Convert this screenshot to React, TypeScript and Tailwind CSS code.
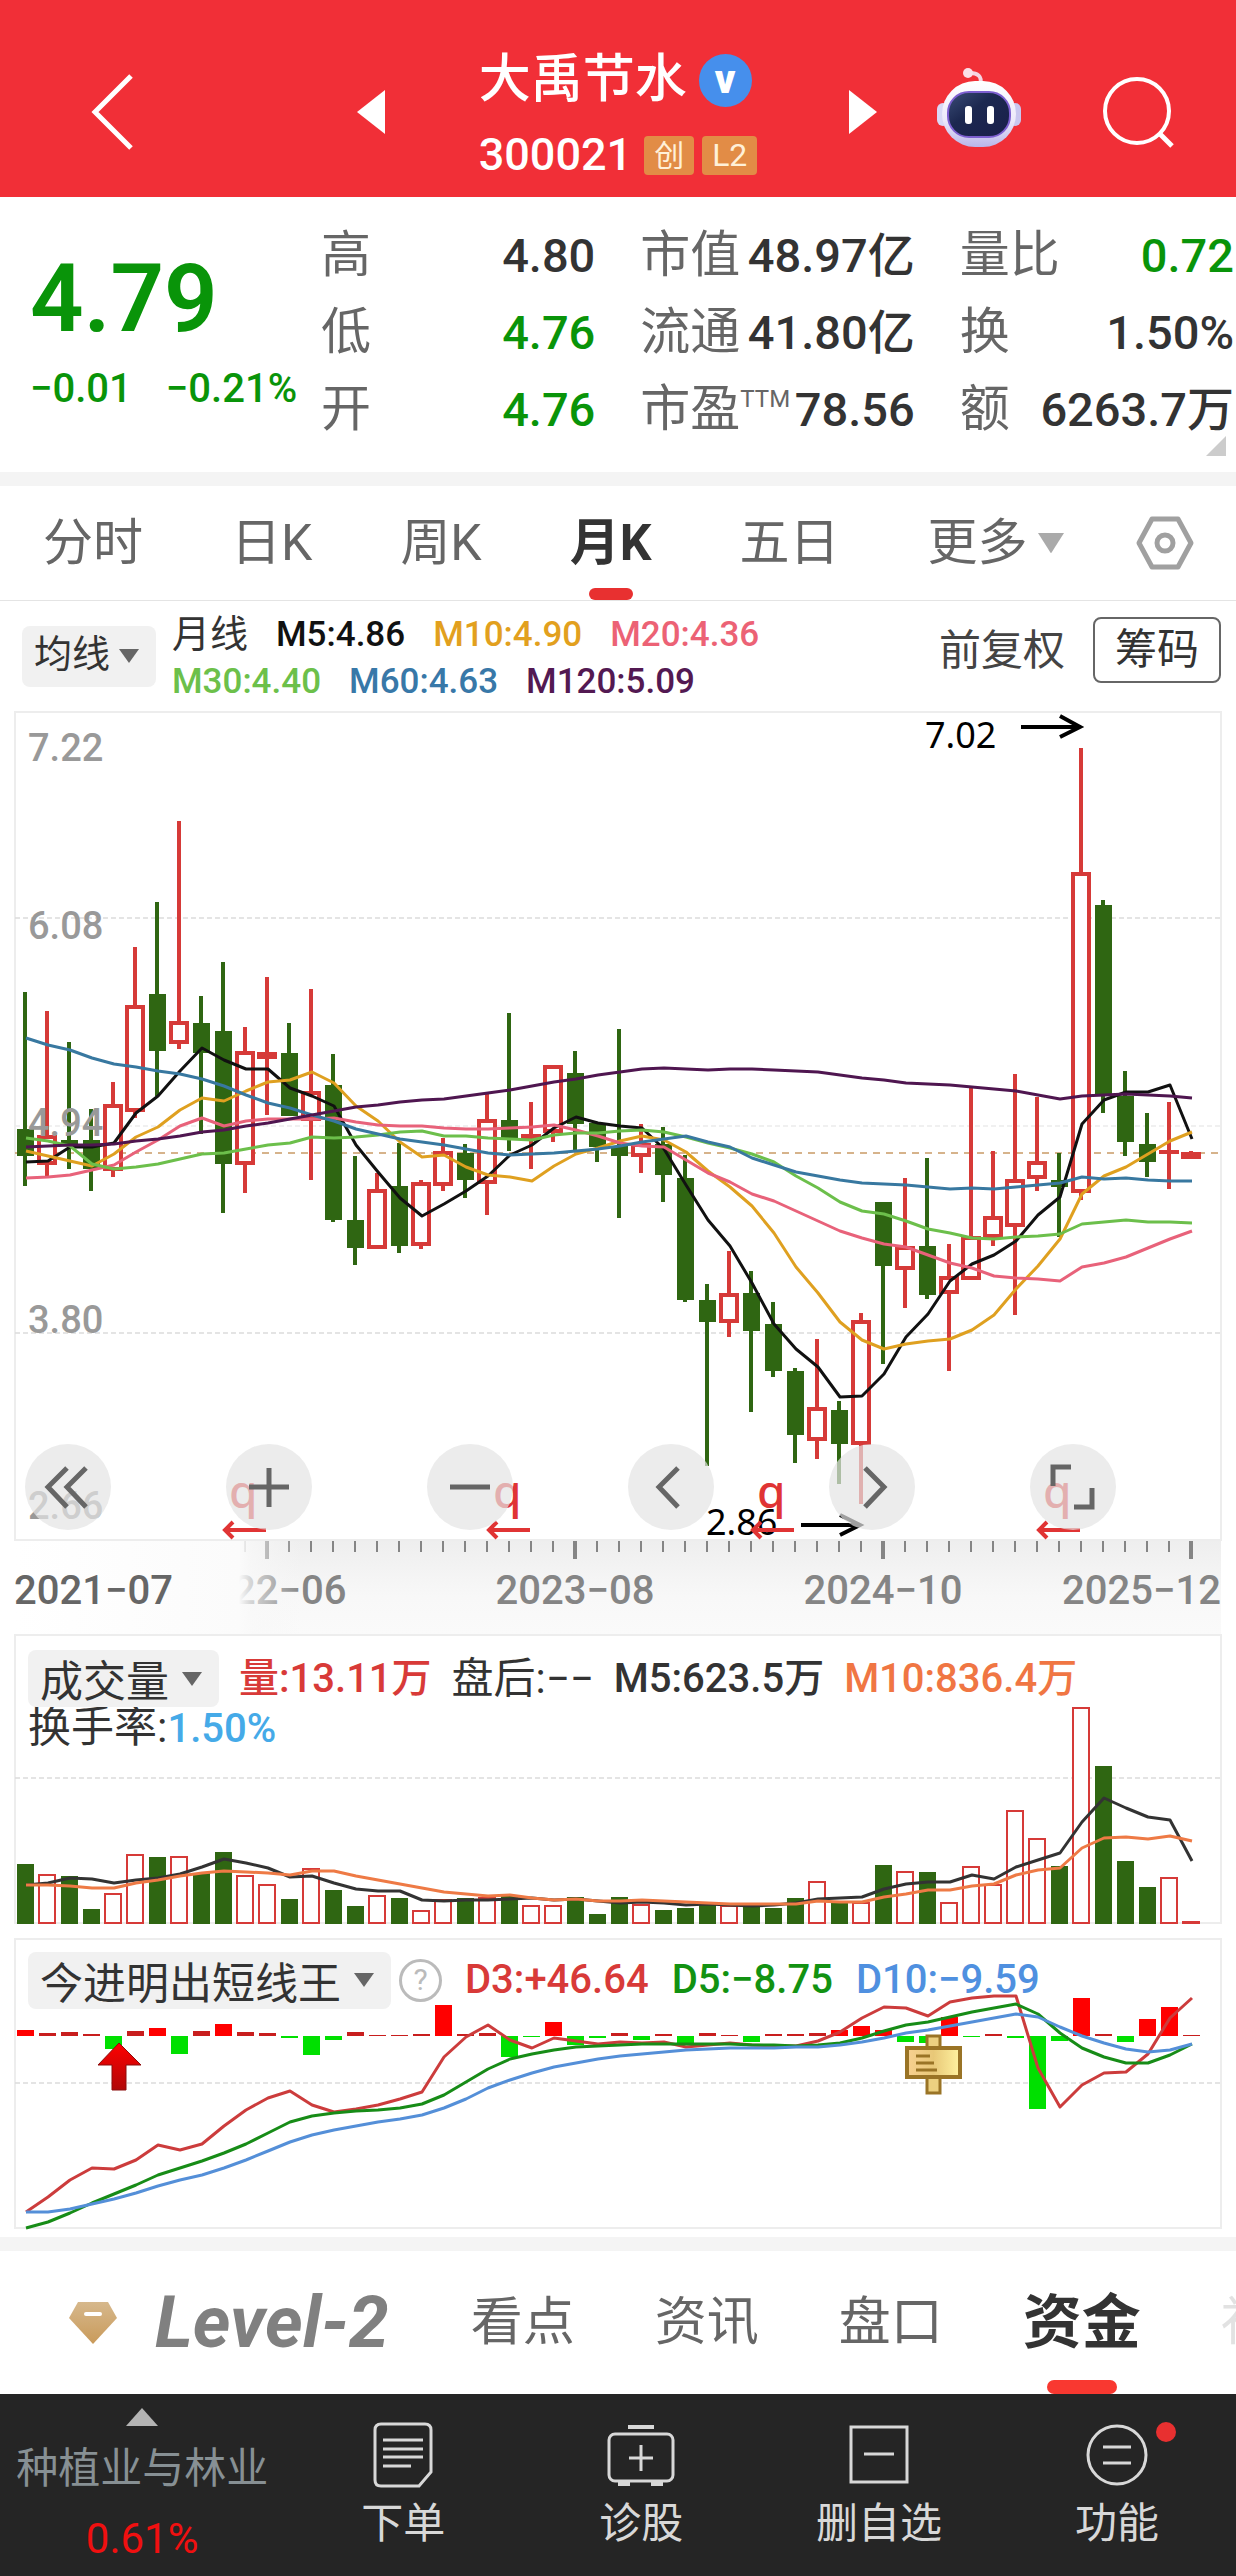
import React from "react";

type Candle = {
	up: boolean;
	high: number;
	top: number;
	bottom: number;
	low: number;
};

const STEP = 22;
const FIRST_X = 25;
const UP = "#d63a38";
const DOWN = "#2f6612";

const xAt = (index: number) => FIRST_X + index * STEP;

// up(1)/down(0), high, body top, body bottom, low
const CANDLES: Candle[] = [
	[0, 992, 1129, 1156, 1186],
	[1, 1011, 1135, 1165, 1177],
	[0, 1042, 1140, 1144, 1169],
	[0, 1109, 1140, 1169, 1191],
	[1, 1082, 1104, 1171, 1177],
	[1, 947, 1005, 1112, 1118],
	[0, 902, 994, 1051, 1096],
	[1, 821, 1021, 1044, 1049],
	[0, 996, 1023, 1053, 1134],
	[0, 962, 1031, 1164, 1213],
	[1, 1027, 1051, 1165, 1193],
	[1, 977, 1052, 1059, 1115],
	[0, 1023, 1053, 1116, 1116],
	[1, 989, 1091, 1121, 1180],
	[0, 1054, 1085, 1220, 1222],
	[0, 1156, 1220, 1248, 1265],
	[1, 1173, 1189, 1249, 1249],
	[0, 1143, 1186, 1246, 1253],
	[1, 1180, 1182, 1246, 1249],
	[1, 1138, 1151, 1186, 1191],
	[0, 1144, 1153, 1180, 1198],
	[1, 1094, 1119, 1184, 1215],
	[0, 1013, 1120, 1139, 1151],
	[1, 1102, 1134, 1139, 1169],
	[1, 1065, 1065, 1133, 1142],
	[0, 1051, 1073, 1124, 1151],
	[0, 1123, 1123, 1147, 1162],
	[0, 1029, 1146, 1156, 1218],
	[1, 1124, 1143, 1157, 1173],
	[0, 1127, 1144, 1175, 1202],
	[0, 1155, 1178, 1300, 1302],
	[0, 1284, 1300, 1322, 1466],
	[1, 1251, 1293, 1323, 1337],
	[0, 1271, 1293, 1331, 1412],
	[0, 1302, 1324, 1371, 1377],
	[0, 1368, 1371, 1435, 1463],
	[1, 1339, 1407, 1441, 1459],
	[0, 1401, 1410, 1444, 1484],
	[1, 1313, 1320, 1445, 1504],
	[0, 1202, 1202, 1266, 1364],
	[1, 1178, 1246, 1270, 1308],
	[0, 1158, 1246, 1295, 1299],
	[1, 1244, 1276, 1294, 1371],
	[1, 1087, 1236, 1280, 1280],
	[1, 1151, 1216, 1238, 1246],
	[1, 1074, 1179, 1227, 1315],
	[1, 1097, 1161, 1179, 1191],
	[0, 1153, 1180, 1187, 1237],
	[1, 748, 872, 1193, 1200],
	[0, 900, 905, 1096, 1113],
	[0, 1071, 1096, 1142, 1156],
	[0, 1113, 1144, 1162, 1177],
	[1, 1102, 1150, 1154, 1189],
	[1, 1151, 1152, 1159, 1159],
].map(([up, high, top, bottom, low]) => ({ up: up === 1, high, top, bottom, low }));

const MA = {
	m5: [
		1162, 1161, 1147, 1147, 1143, 1113, 1096, 1071, 1048, 1060, 1069, 1069, 1088, 1096, 1106, 1145, 1172, 1198, 1216,
		1204, 1191, 1176, 1155, 1145, 1128, 1117, 1123, 1126, 1128, 1149, 1185, 1220, 1246, 1283, 1324, 1349, 1367, 1397,
		1396, 1374, 1337, 1314, 1281, 1264, 1255, 1241, 1215, 1197, 1124, 1100, 1092, 1092, 1085, 1139,
	],
	m10: [
		1151, 1156, 1161, 1166, 1154, 1137, 1127, 1110, 1098, 1101, 1091, 1082, 1080, 1072, 1083, 1106, 1121, 1142, 1157,
		1155, 1167, 1175, 1177, 1181, 1166, 1154, 1148, 1141, 1136, 1140, 1152, 1171, 1187, 1206, 1233, 1267, 1293, 1322,
		1340, 1349, 1344, 1341, 1339, 1330, 1315, 1289, 1266, 1239, 1194, 1176, 1167, 1154, 1141, 1132,
	],
	m20: [
		1178, 1177, 1175, 1170, 1165, 1152, 1140, 1126, 1118, 1126, 1121, 1119, 1119, 1119, 1118, 1122, 1125, 1126, 1126,
		1128, 1129, 1129, 1128, 1127, 1125, 1130, 1136, 1143, 1146, 1147, 1160, 1173, 1182, 1194, 1201, 1211, 1221, 1231,
		1238, 1244, 1247, 1255, 1263, 1268, 1276, 1278, 1279, 1281, 1267, 1263, 1257, 1248, 1239, 1231,
	],
	m30: [
		1138, 1141, 1146, 1164, 1169, 1167, 1164, 1159, 1154, 1153, 1149, 1145, 1143, 1137, 1138, 1137, 1135, 1132, 1131,
		1136, 1136, 1138, 1139, 1140, 1135, 1133, 1133, 1131, 1130, 1132, 1137, 1143, 1148, 1154, 1162, 1176, 1188, 1202,
		1211, 1214, 1221, 1229, 1233, 1238, 1239, 1237, 1236, 1234, 1224, 1222, 1220, 1222, 1222, 1223,
	],
	m60: [
		1038, 1045, 1050, 1058, 1064, 1067, 1071, 1074, 1079, 1086, 1095, 1103, 1108, 1115, 1121, 1129, 1134, 1139, 1142,
		1145, 1149, 1153, 1155, 1154, 1153, 1151, 1149, 1146, 1142, 1139, 1136, 1142, 1147, 1158, 1165, 1172, 1176, 1180,
		1183, 1184, 1185, 1187, 1189, 1188, 1189, 1187, 1185, 1183, 1177, 1179, 1178, 1180, 1181, 1181,
	],
	m120: [
		1147, 1146, 1145, 1145, 1144, 1141, 1139, 1136, 1132, 1130, 1126, 1123, 1119, 1115, 1111, 1107, 1105, 1102, 1100,
		1099, 1096, 1093, 1090, 1086, 1082, 1079, 1075, 1072, 1069, 1068, 1069, 1070, 1069, 1069, 1070, 1071, 1072, 1075,
		1078, 1080, 1083, 1084, 1085, 1087, 1089, 1091, 1095, 1099, 1096, 1095, 1094, 1095, 1096, 1098,
	],
};

const VOLUME_TOPS = [
	1864, 1874, 1876, 1909, 1893, 1854, 1857, 1856, 1873, 1852, 1875, 1884, 1899, 1868, 1890, 1906, 1895, 1898, 1910,
	1899, 1898, 1897, 1895, 1905, 1905, 1897, 1914, 1897, 1904, 1910, 1908, 1905, 1905, 1905, 1908, 1898, 1881, 1902,
	1902, 1865, 1871, 1872, 1902, 1866, 1884, 1810, 1838, 1866, 1707, 1766, 1861, 1887, 1877, 1921,
];

const VOLUME_MA = {
	m5: [
		1885, 1883, 1878, 1879, 1883, 1880, 1878, 1874, 1867, 1859, 1863, 1868, 1877, 1876, 1883, 1889, 1891, 1891, 1900,
		1901, 1900, 1900, 1899, 1898, 1900, 1899, 1901, 1903, 1902, 1903, 1905, 1904, 1905, 1906, 1905, 1903, 1899, 1898,
		1897, 1889, 1884, 1882, 1882, 1875, 1879, 1867, 1860, 1853, 1822, 1798, 1808, 1817, 1820, 1861,
	],
	m10: [
		1885, 1885, 1886, 1888, 1888, 1883, 1880, 1876, 1873, 1871, 1872, 1873, 1875, 1871, 1871, 1876, 1880, 1884, 1888,
		1892, 1894, 1896, 1895, 1898, 1900, 1899, 1901, 1901, 1900, 1901, 1902, 1903, 1904, 1904, 1904, 1904, 1901, 1902,
		1902, 1897, 1894, 1890, 1890, 1886, 1884, 1875, 1870, 1868, 1848, 1838, 1837, 1839, 1836, 1841,
	],
};

const FLOW = [
	6, 3, 4, 2, -13, 5, 8, -18, 5, 12, 4, 3, -2, -19, -4, 4, 1, 1, 2, 31, 2, 3, -21, -1, 14, -9, -2, 3, -4, 2, -7, 3, 1,
	-6, 2, 2, 3, 6, 10, 6, -6, -7, 19, -1, 2, -2, -73, -5, 38, 2, -6, 17, 29, 1,
];

const FLOW_LINES = {
	d3: [
		2212, 2197, 2180, 2168, 2169, 2160, 2145, 2150, 2144, 2126, 2110, 2098, 2091, 2105, 2112, 2109, 2105, 2099, 2092,
		2057, 2037, 2025, 2040, 2048, 2038, 2041, 2044, 2042, 2043, 2042, 2047, 2045, 2043, 2045, 2046, 2046, 2041, 2032,
		2018, 2007, 2008, 2016, 2002, 1998, 1996, 1996, 2068, 2107, 2085, 2073, 2072, 2054, 2018, 1998,
	],
	d5: [
		2228, 2222, 2213, 2203, 2194, 2185, 2175, 2168, 2161, 2153, 2144, 2133, 2122, 2116, 2113, 2111, 2110, 2108, 2104,
		2095, 2082, 2069, 2059, 2054, 2050, 2047, 2046, 2045, 2044, 2044, 2044, 2044, 2044, 2045, 2045, 2046, 2045, 2043,
		2038, 2031, 2025, 2022, 2017, 2012, 2008, 2004, 2014, 2033, 2048, 2057, 2063, 2063, 2055, 2044,
	],
	d10: [
		2212, 2212, 2209, 2204, 2199, 2193, 2186, 2180, 2175, 2168, 2160, 2151, 2142, 2135, 2130, 2126, 2122, 2119, 2115,
		2108, 2099, 2088, 2080, 2073, 2067, 2063, 2059, 2056, 2054, 2052, 2050, 2049, 2048, 2048, 2048, 2047, 2047, 2045,
		2042, 2038, 2033, 2030, 2026, 2022, 2018, 2014, 2017, 2027, 2036, 2043, 2049, 2052, 2050, 2044,
	],
};

type SeriesProp = {
	values: number[];
	color: string;
	width?: number;
};

function Series({ values, color, width = 3 }: SeriesProp) {
	return (
		<polyline
			points={values.map((value, index) => `${xAt(index) + 1},${value}`).join(" ")}
			fill="none"
			stroke={color}
			strokeWidth={width}
			strokeLinejoin="round"
		/>
	);
}

function GridLine({ y, color = "#dcdcdc" }: { y: number; color?: string }) {
	return <line x1="15" x2="1220" y1={y} y2={y} stroke={color} strokeWidth="1.5" strokeDasharray="5 3" />;
}

type PickerProp = {
	label: string;
	options: string[];
	className: string;
};

function Picker({ label, options, className }: PickerProp) {
	return (
		<label className="relative flex shrink-0 items-center">
			<select
				aria-label={label}
				className={`appearance-none rounded-lg bg-[#f1f1f1] pb-1 pl-3 text-[#333] outline-none ${className}`}
			>
				{options.map((option) => (
					<option key={option}>{option}</option>
				))}
			</select>
			<svg viewBox="0 0 22 14" className="pointer-events-none absolute right-4 w-[22px] fill-[#666]">
				<path d="M1 0h20L11 14z" />
			</svg>
		</label>
	);
}

function Robot() {
	return (
		<svg viewBox="0 0 84 80" className="w-[84px]">
			<defs>
				<linearGradient id="shell" x1="0" y1="0" x2="0" y2="1">
					<stop offset="0" stopColor="#ffffff" />
					<stop offset="0.6" stopColor="#ece8fa" />
					<stop offset="1" stopColor="#b9b6ea" />
				</linearGradient>
				<linearGradient id="visor" x1="0" y1="0" x2="1" y2="1">
					<stop offset="0" stopColor="#3b4d78" />
					<stop offset="0.4" stopColor="#1c2850" />
					<stop offset="1" stopColor="#1a1f4a" />
				</linearGradient>
			</defs>
			<path d="M43 17C46 8 40 5 33 5" fill="none" stroke="#f5d5e2" strokeWidth="4" strokeLinecap="round" />
			<circle cx="31" cy="5" r="5" fill="#fbdfe8" />
			<rect x="0" y="35" width="12" height="23" rx="6" fill="#d9d8f6" />
			<rect x="72" y="35" width="12" height="23" rx="6" fill="#c9c6ef" />
			<rect x="5" y="13" width="74" height="66" rx="33" fill="url(#shell)" />
			<rect x="11" y="24" width="62" height="45" rx="21" fill="url(#visor)" stroke="#7d5fd0" strokeWidth="2" />
			<rect x="28" y="38" width="7" height="18" rx="3" fill="#fff" />
			<rect x="50" y="38" width="7" height="18" rx="3" fill="#fff" />
		</svg>
	);
}

function Header() {
	return (
		<header className="grid grid-cols-[1fr_auto_1fr] items-center bg-[#f12f37] pt-[47px] pb-5 text-white">
			<div className="flex items-center justify-between pr-[94px] pl-[90px]">
				<button aria-label="返回">
					<svg viewBox="0 0 44 76" className="w-[44px]" fill="none" stroke="currentColor" strokeWidth="5">
						<path d="M41 2L5 38l36 36" />
					</svg>
				</button>
				<button aria-label="上一只">
					<svg viewBox="0 0 28 44" className="w-[28px] fill-white">
						<path d="M28 0v44L0 22z" />
					</svg>
				</button>
			</div>
			<div className="flex flex-col gap-5">
				<div className="flex items-center gap-3">
					<h1 className="text-[52px] leading-[66px] font-medium">大禹节水</h1>
					<span className="flex size-[53px] items-center justify-center rounded-full bg-[#468fec] text-[40px] leading-none font-black">
						v
					</span>
				</div>
				<div className="flex items-center gap-2 leading-[44px]">
					<span className="mr-1 text-[45px] font-medium">300021</span>
					<span className="rounded bg-[#e28c46] px-[10px] text-[30px] leading-[39px] text-[#fff0d8]">创</span>
					<span className="rounded bg-[#e28c46] px-[10px] text-[32px] leading-[39px] text-[#fff0d8]">L2</span>
				</div>
			</div>
			<div className="flex items-center gap-[60px] pr-[62px] pl-[92px]">
				<button aria-label="下一只">
					<svg viewBox="0 0 28 44" className="w-[28px] fill-white">
						<path d="M0 0v44l28-22z" />
					</svg>
				</button>
				<button aria-label="智能助手" className="-mt-2">
					<Robot />
				</button>
				<button aria-label="搜索" className="ml-auto">
					<svg viewBox="0 0 72 72" className="w-[72px]" fill="none" stroke="currentColor" strokeWidth="4">
						<circle cx="35" cy="35" r="32" />
						<path d="M58 58l12 12" strokeWidth="5" />
					</svg>
				</button>
			</div>
		</header>
	);
}

type QuoteItem = {
	label: string;
	sup?: string;
	value: string;
	green?: boolean;
};

const QUOTES: QuoteItem[] = [
	{ label: "高", value: "4.80" },
	{ label: "市值", value: "48.97亿" },
	{ label: "量比", value: "0.72", green: true },
	{ label: "低", value: "4.76", green: true },
	{ label: "流通", value: "41.80亿" },
	{ label: "换", value: "1.50%" },
	{ label: "开", value: "4.76", green: true },
	{ label: "市盈", sup: "TTM", value: "78.56" },
	{ label: "额", value: "6263.7万" },
];

function Quote() {
	return (
		<section className="relative flex border-b-[14px] border-[#f4f4f4] pt-5 pr-[2px] pb-6 pl-[30px]">
			<div className="flex-[291_1_0%] pt-[34px] text-[#099409]">
				<div className="text-[94px] leading-[96px] font-semibold">4.79</div>
				<div className="mt-[18px] flex gap-[34px] text-[40px] leading-[48px] font-medium">
					<span>−0.01</span>
					<span>−0.21%</span>
				</div>
			</div>
			<dl className="grid flex-[913_1_0%] grid-cols-3 gap-x-[45px]">
				{QUOTES.map((quote) => (
					<div key={quote.label} className="flex justify-between leading-[77px] whitespace-nowrap">
						<dt className="flex text-[50px] text-[#666]">
							{quote.label}
							{quote.sup && <span className="text-[24px] leading-[56px]">{quote.sup}</span>}
						</dt>
						<dd className={quote.green ? "text-[47px] font-medium text-[#099409]" : "text-[47px] font-medium text-[#333]"}>
							{quote.value}
						</dd>
					</div>
				))}
			</dl>
			<svg viewBox="0 0 20 20" className="absolute right-[10px] bottom-4 w-5 fill-[#ccc]">
				<path d="M20 0v20H0z" />
			</svg>
		</section>
	);
}

const PERIODS = ["分时", "日K", "周K", "月K", "五日"];

function PeriodTabs() {
	const [period, setPeriod] = React.useState<string>("月K");

	return (
		<nav className="flex items-center justify-between border-b border-[#e4e4e4] pr-[42px] pl-[43px] text-[50px] leading-[58px] text-[#666]">
			<div className="flex gap-[88px]">
				{PERIODS.map((name) => (
					<button
						key={name}
						onClick={() => setPeriod(name)}
						className={name === period ? "relative py-7 font-bold text-[#333]" : "relative py-7"}
					>
						{name}
						{name === period && (
							<span className="absolute bottom-0 left-1/2 h-3 w-11 -translate-x-1/2 rounded-full bg-[#e83030]" />
						)}
					</button>
				))}
				<label className="relative flex items-center">
					<select aria-label="更多周期" className="appearance-none bg-transparent pr-9 outline-none">
						<option>更多</option>
					</select>
					<svg viewBox="0 0 28 22" className="pointer-events-none absolute right-0 w-[26px] fill-[#aaa]">
						<path d="M0 0h28L14 22z" />
					</svg>
				</label>
			</div>
			<button aria-label="图表设置">
				<svg viewBox="0 0 58 54" className="w-[58px]" fill="none" stroke="#a0a0a0" strokeWidth="5" strokeLinejoin="round">
					<path d="M16 3h26l13 24-13 24H16L3 27z" />
					<circle cx="29" cy="27" r="8" />
				</svg>
			</button>
		</nav>
	);
}

function Averages() {
	return (
		<div className="flex items-center py-[6px] pr-[15px] pl-[22px] whitespace-nowrap">
			<Picker label="主图指标" options={["均线"]} className="h-[61px] pr-[45px] text-[38px]" />
			<div className="ml-4 pt-1 text-[35px] leading-[47px] font-medium">
				<div className="flex gap-[28px]">
					<span className="text-[38px] font-normal text-[#333]">月线</span>
					<span className="text-[#111]">M5:4.86</span>
					<span className="text-[#e2a01e]">M10:4.90</span>
					<span className="text-[#ec6275]">M20:4.36</span>
				</div>
				<div className="flex gap-[28px]">
					<span className="text-[#6cc04a]">M30:4.40</span>
					<span className="text-[#3878a8]">M60:4.63</span>
					<span className="text-[#531952]">M120:5.09</span>
				</div>
			</div>
			<div className="ml-auto flex items-center gap-7 pb-3 text-[42px] text-[#333]">
				<button className="text-[#444]">前复权</button>
				<button className="rounded-lg border-2 border-[#666] px-5 leading-[62px]">筹码</button>
			</div>
		</div>
	);
}

const PRICE_LABELS: [string, number][] = [
	["7.22", 761],
	["6.08", 939],
	["4.94", 1136],
	["3.80", 1333],
	["2.66", 1519],
];

const DIVIDENDS = [224, 488, 752, 1038];

type ToolButton = {
	name: string;
	path: string;
};

const TOOLS: ToolButton[] = [
	{ name: "最早", path: "M42 24L23 43l19 20M61 24L42 43l19 20" },
	{ name: "放大", path: "M43 24v39M23 43h40" },
	{ name: "缩小", path: "M23 43h40" },
	{ name: "左移", path: "M50 24L31 43l19 20" },
	{ name: "右移", path: "M36 24l19 19-19 20" },
	{ name: "全屏", path: "M41 23H23v19M62 44v19H44" },
];

function PriceChart() {
	return (
		<div className="relative">
			<svg viewBox="0 711 1236 923" className="w-full">
				<defs>
					<linearGradient id="strip" x1="0" y1="0" x2="0" y2="1">
						<stop offset="0" stopColor="#eeeeee" />
						<stop offset="0.6" stopColor="#f8f8f8" />
						<stop offset="1" stopColor="#fafafa" />
					</linearGradient>
					<linearGradient id="fade" x1="0" y1="0" x2="1" y2="0">
						<stop offset="0" stopColor="#fff" />
						<stop offset="0.78" stopColor="#fbfbfb" />
						<stop offset="0.82" stopColor="#f9f9f9" stopOpacity="0.7" />
						<stop offset="1" stopColor="#f6f6f6" stopOpacity="0" />
					</linearGradient>
				</defs>
				<rect x="15" y="712" width="1206" height="828" fill="none" stroke="#ededed" strokeWidth="2" />
				<GridLine y={918} />
				<GridLine y={1126} color="#ececec" />
				<GridLine y={1333} />
				<line x1="15" x2="1220" y1="1153" y2="1153" stroke="#c99a66" strokeWidth="1.5" strokeDasharray="7 6" />

				{CANDLES.map(({ up, high, top, bottom, low }, index) => {
					const x = xAt(index);
					if (!up) {
						return (
							<g key={index} fill={DOWN}>
								<rect x={x - 2} y={high} width="4" height={low - high} />
								<rect x={x - 8} y={top} width="17" height={bottom - top} />
							</g>
						);
					}
					return (
						<g key={index} fill={UP}>
							<rect x={x - 2} y={high} width="4" height={low - high} />
							<rect x={x - 10} y={top} width="20" height={bottom - top} />
							{bottom - top > 8 && <rect x={x - 6} y={top + 4} width="12" height={bottom - top - 8} fill="#fff" />}
						</g>
					);
				})}

				<g fill="#999" fontSize="38" fontWeight="500">
					{PRICE_LABELS.map(([label, y]) => (
						<text key={label} x="28" y={y}>
							{label}
						</text>
					))}
				</g>

				<Series values={MA.m5} color="#111" />
				<Series values={MA.m10} color="#dfa020" />
				<Series values={MA.m20} color="#e8627a" />
				<Series values={MA.m30} color="#6cbf4b" />
				<Series values={MA.m60} color="#3878a0" />
				<Series values={MA.m120} color="#4f1650" />

				<g className="[font-family:'Noto_Sans',sans-serif]" fontSize="36">
					<text x="925" y="748">
						7.02
					</text>
					<text x="706" y="1535">
						2.86
					</text>
				</g>
				<g fill="none" stroke="#000" strokeWidth="4">
					<path d="M1021 727h59M1060 716l20 11-20 10" />
					<path d="M801 1525h59M840 1515l20 10-20 10" />
				</g>
				{DIVIDENDS.map((x) => (
					<g key={x}>
						<text
							x={x + 5}
							y="1508"
							fill="#e03434"
							fontSize="46"
							fontWeight="500"
							className="[font-family:'Noto_Sans',sans-serif]"
						>
							q
						</text>
						<path d={`M${x + 42} 1530H${x + 1}M${x + 9} 1522l-8 8 8 8`} fill="none" stroke="#e03434" strokeWidth="4" />
					</g>
				))}

				<rect x="15" y="1541" width="1206" height="93" fill="url(#strip)" />
				{CANDLES.map((_, index) => {
					const major = (index + 3) % 14 === 0;
					return index > 9 ? (
						<rect
							key={index}
							x={xAt(index) - (major ? 2 : 1)}
							y="1541"
							width={major ? 4 : 2}
							height={major ? 18 : 11}
							fill="#858585"
						/>
					) : null;
				})}
				<g fill="#858585" fontSize="40" fontWeight="500">
					<text x="267" y="1604" textAnchor="middle">
						2022−06
					</text>
					<rect x="15" y="1541" width="287" height="93" fill="url(#fade)" />
					<text x="575" y="1604" textAnchor="middle">
						2023−08
					</text>
					<text x="883" y="1604" textAnchor="middle">
						2024−10
					</text>
					<text x="1221" y="1604" textAnchor="end">
						2025−12
					</text>
					<text x="14" y="1604" fill="#666">
						2021−07
					</text>
				</g>
			</svg>
			<div className="absolute bottom-[104px] flex w-full justify-between pr-[120px] pl-[25px]">
				{TOOLS.map((tool) => (
					<button key={tool.name} aria-label={tool.name} className="rounded-full bg-[#e4e4e4]/70">
						<svg viewBox="0 0 86 86" className="w-[86px]" fill="none" stroke="#666" strokeWidth="5">
							<path d={tool.path} />
						</svg>
					</button>
				))}
			</div>
		</div>
	);
}

function VolumeChart() {
	return (
		<div className="relative">
			<svg viewBox="0 1634 1236 298" className="w-full">
				<rect x="15" y="1635" width="1206" height="288" fill="none" stroke="#ededed" strokeWidth="2" />
				<GridLine y={1778} />
				{VOLUME_TOPS.map((top, index) => {
					const x = xAt(index);
					if (!CANDLES[index].up) {
						return <rect key={index} x={x - 8} y={top} width="17" height={1924 - top} fill={DOWN} />;
					}
					return (
						<rect
							key={index}
							x={x - 8}
							y={top + 1}
							width="16"
							height={Math.max(1923 - top - 1, 1)}
							fill="#fff"
							stroke={UP}
							strokeWidth="2"
						/>
					);
				})}
				<Series values={VOLUME_MA.m5} color="#333" />
				<Series values={VOLUME_MA.m10} color="#ee7a45" />
			</svg>
			<div className="absolute top-[13px] left-7 text-[40px] whitespace-nowrap text-[#333]">
				<div className="flex items-center gap-5 font-medium">
					<Picker label="副图指标" options={["成交量"]} className="h-[57px] pr-[50px] text-[43px] font-normal" />
					<span className="text-[#d83a38]">量:13.11万</span>
					<span className="text-[42px] font-normal">盘后:−−</span>
					<span>M5:623.5万</span>
					<span className="text-[#f07643]">M10:836.4万</span>
				</div>
				<div className="text-[43px] leading-[34px]">
					换手率:<span className="text-[40px] font-medium text-[#45aae8]">1.50%</span>
				</div>
			</div>
		</div>
	);
}

function FlowChart() {
	return (
		<div className="relative">
			<svg viewBox="0 1932 1236 305" className="w-full">
				<defs>
					<linearGradient id="arrow" x1="0" y1="0" x2="0" y2="1">
						<stop offset="0" stopColor="#ff0000" />
						<stop offset="1" stopColor="#b00808" />
					</linearGradient>
					<linearGradient id="board" x1="0" y1="0" x2="1" y2="0">
						<stop offset="0" stopColor="#f8d090" />
						<stop offset="0.5" stopColor="#e8c878" />
						<stop offset="1" stopColor="#fff2a0" />
					</linearGradient>
				</defs>
				<rect x="15" y="1939" width="1206" height="289" fill="none" stroke="#ededed" strokeWidth="2" />
				<GridLine y={2083} />
				{FLOW.map((value, index) => (
					<rect
						key={index}
						x={xAt(index) - 8}
						y={value > 0 ? 2036 - value : 2036}
						width="17"
						height={Math.abs(value)}
						fill={value > 0 ? (value > 5 ? "#ff0000" : "#c81e1e") : "#00e000"}
					/>
				))}
				<Series values={FLOW_LINES.d3} color="#cc3c3c" />
				<Series values={FLOW_LINES.d5} color="#178c17" />
				<Series values={FLOW_LINES.d10} color="#548fd8" />
				<path d="M119 2043l22 22h-15v25h-14v-25H98z" fill="url(#arrow)" stroke="#8c0c0c" strokeWidth="1" />
				<g stroke="#9a7426">
					<rect x="927" y="2036" width="13" height="57" fill="#ecd080" strokeWidth="3" />
					<rect x="907" y="2048" width="53" height="29" fill="url(#board)" strokeWidth="4" />
					<path d="M916 2056h14M916 2063h18M916 2070h21" strokeWidth="3" />
				</g>
			</svg>
			<div className="absolute top-[18px] left-7 flex items-center gap-[23px] text-[40px] font-medium whitespace-nowrap">
				<div className="flex items-center gap-2">
					<Picker label="副图指标" options={["今进明出短线王"]} className="h-[57px] pr-[50px] text-[43px] font-normal" />
					<button
						aria-label="指标说明"
						className="size-[43px] rounded-full border-3 border-[#bbb] text-[30px] leading-none font-normal text-[#bbb]"
					>
						?
					</button>
				</div>
				<span className="text-[#d83a38]">D3:+46.64</span>
				<span className="text-[#129212]">D5:−8.75</span>
				<span className="text-[#4f90e0]">D10:−9.59</span>
			</div>
		</div>
	);
}

const DETAILS = ["看点", "资讯", "盘口", "资金"];

function DetailTabs() {
	const [detail, setDetail] = React.useState<string>("资金");

	return (
		<nav className="flex items-center overflow-hidden border-t-[14px] border-[#f4f4f4] pl-[69px] leading-[71px] whitespace-nowrap text-[#666]">
			<button className="flex items-center gap-[38px] text-[72px] font-bold text-[#808080] italic">
				<svg viewBox="0 0 48 42" className="w-[48px]">
					<defs>
						<linearGradient id="gem" x1="0" y1="0" x2="0" y2="1">
							<stop offset="0" stopColor="#d6b88c" />
							<stop offset="1" stopColor="#c99a5a" />
						</linearGradient>
					</defs>
					<path d="M9 0h30l9 16-24 26L0 16z" fill="url(#gem)" />
					<rect x="15" y="10" width="18" height="4" rx="2" fill="#fff" />
				</svg>
				Level-2
			</button>
			<div className="ml-[82px] flex gap-[80px] text-[52px]">
				{DETAILS.map((name) => (
					<button
						key={name}
						onClick={() => setDetail(name)}
						className={name === detail ? "relative py-9 text-[59px] font-bold text-[#333]" : "relative py-9"}
					>
						{name}
						{name === detail && (
							<span className="absolute bottom-0 left-1/2 h-[14px] w-[70px] -translate-x-1/2 rounded-full bg-[#f93830]" />
						)}
					</button>
				))}
				<button className="text-[#e2e2e2]">社区</button>
			</div>
		</nav>
	);
}

function BottomBar() {
	return (
		<footer className="flex bg-[#252525] text-[42px] text-[#d8d8d8]">
			<button className="flex w-[23%] flex-col items-center pt-[14px] whitespace-nowrap">
				<svg viewBox="0 0 32 18" className="w-[32px] fill-[#b4b4b4]">
					<path d="M16 0l16 18H0z" />
				</svg>
				<span className="mt-[10px] leading-[66px] text-[#879094]">种植业与林业</span>
				<span className="leading-[74px] text-[#f01010]">0.61%</span>
			</button>
			<div className="grid flex-1 grid-cols-4 leading-[64px]">
				<button className="flex flex-col items-center gap-1 pt-7 pb-5">
					<svg viewBox="0 0 62 66" className="h-[66px]" fill="none" stroke="currentColor" strokeWidth="3">
						<path d="M9 2h44q6 0 6 6v42L47 64H9q-6 0-6-6V8q0-6 6-6z" />
						<path d="M11 18h40M11 27h40M11 35h40M11 44h28" />
					</svg>
					下单
				</button>
				<button className="flex flex-col items-center gap-1 pt-7 pb-5">
					<svg viewBox="0 0 68 66" className="h-[66px]" fill="none" stroke="currentColor" strokeWidth="3">
						<rect x="2" y="12" width="64" height="47" rx="6" />
						<path d="M34 23v26M22 36h24" />
						<path d="M21 5h26M11 62h12M44 62h12" strokeWidth="4" />
					</svg>
					诊股
				</button>
				<button className="flex flex-col items-center gap-1 pt-7 pb-5">
					<svg viewBox="0 0 60 66" className="h-[66px]" fill="none" stroke="currentColor" strokeWidth="3">
						<rect x="2" y="5" width="56" height="55" />
						<path d="M15 32h30" />
					</svg>
					删自选
				</button>
				<button className="relative flex flex-col items-center gap-1 pt-7 pb-5">
					<svg viewBox="0 0 62 66" className="h-[66px]" fill="none" stroke="currentColor" strokeWidth="3">
						<circle cx="31" cy="33" r="29" />
						<path d="M17 25h28M17 41h28" />
					</svg>
					<span className="absolute top-7 right-[60px] size-5 rounded-full bg-[#e83030]" />
					功能
				</button>
			</div>
		</footer>
	);
}

export default function App() {
	return (
		<main className="bg-white [font-family:Roboto,'Noto_Sans_CJK_SC',sans-serif]">
			<Header />
			<Quote />
			<PeriodTabs />
			<Averages />
			<PriceChart />
			<VolumeChart />
			<FlowChart />
			<DetailTabs />
			<BottomBar />
		</main>
	);
}
